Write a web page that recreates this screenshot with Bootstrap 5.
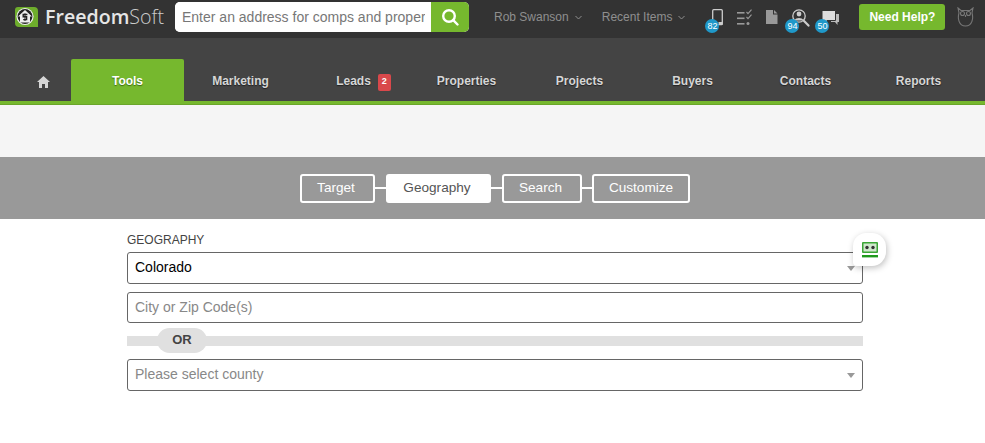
<!DOCTYPE html>
<html lang="en">
<head>
<meta charset="utf-8">
<title>FreedomSoft</title>
<link rel="stylesheet" href="https://cdn.jsdelivr.net/npm/bootstrap@5.3.0/dist/css/bootstrap.min.css">
<style>
html,body{height:100%;overflow:hidden}
body{font-family:"Liberation Sans",Arial,sans-serif;background:#fff;color:#444}
.fs-top{height:38px;background:#333;padding-left:15px;padding-bottom:4px}
.fs-logo{width:160px;height:34px;flex:none}
.fs-logo-text{font-family:"Open Sans",sans-serif;font-size:19.6px;line-height:34px;color:#e6e6e6;margin-left:7px;font-weight:600}
.fs-logo-text span{font-weight:300;color:#ccc}
.fs-search{width:294px;height:30px;border-radius:5px;overflow:hidden;background:#fff;flex:none}
.fs-search input{flex:1;min-width:0;border:0;outline:0;font-size:14px;padding:0 6px 0 7px;color:#777;background:#fff;font-family:inherit}
.fs-search input::placeholder{color:#777;opacity:1}
.fs-search-btn{width:38px;background:#76b82e;border:0;padding:0}
.fs-user{font-size:12px;color:#8f8f8f;white-space:nowrap}
.fs-chev{margin-left:6px}
.fs-gap-rob{margin-left:25px}
.fs-gap-recent{margin-left:20px}
.fs-icon-slot{position:relative;flex:none;height:38px;align-self:flex-start}
.fs-slot-phone{width:24px;margin-left:20px}
.fs-slot-tasks{width:18px;margin-left:7px}
.fs-slot-doc{width:12px;margin-left:12px}
.fs-slot-find{width:24px;margin-left:10px}
.fs-slot-chat{width:22px;margin-left:9px}
.fs-count{position:absolute;top:19px;width:14px;height:14px;border-radius:50%;background:#1f98c9;color:#fff;font-size:9px;line-height:14px;text-align:center}
.fs-c1{left:0}
.fs-c2{left:-3px}
.fs-c3{left:-6px}
.fs-help{background:#76b82e;color:#fff;font-size:12px;font-weight:700;border-radius:3px;width:86px;height:26px;line-height:26px;text-align:center;flex:none;margin-left:16px}
.fs-owl{margin-left:12px;flex:none}
.fs-nav{height:63px;background:#444;align-items:flex-end}
.fs-nav a{display:block;width:113px;height:42px;line-height:44px;text-align:center;color:#d6d6d6;font-size:12px;font-weight:700;text-decoration:none;text-shadow:0 1px 1px #222;flex:none}
.fs-nav a.fs-home{width:71px;padding-left:15px}
.fs-nav a.fs-active{background:#76b82e;color:#fff;border-radius:2px 2px 0 0;text-shadow:0 1px 1px #3d6d10}
.fs-nav a.fs-leads{padding-left:20px}
.fs-pill{display:inline-block;background:#d9484b;color:#fff;width:13px;height:17px;line-height:15px;font-size:9px;border-radius:2px;margin-left:7px;vertical-align:1px;text-shadow:none}
.fs-rule{height:4px;background:#76b82e;border-bottom:1px solid #6aa62a}
.fs-blank{height:52px;background:#f5f5f5}
.fs-steps{height:62px;background:#999;padding-left:300px}
.fs-step{height:29px;line-height:23px;border:2px solid #fff;border-radius:3px;color:#fff;font-size:13.6px;text-align:center;flex:none}
.fs-step.fs-current{background:#fff;color:#555}
.fs-s1{width:75px;padding-right:3px}
.fs-s2{width:105px;padding-right:3px}
.fs-s3{width:80px;padding-right:3px}
.fs-s4{width:98px}
.fs-link{width:11px;height:2px;background:#fff;flex:none}
.fs-link.fs-short{width:10px}
.fs-form{width:736px;margin-left:127px;position:relative;padding-top:14px}
.fs-label{font-size:12px;line-height:15px;height:19px;color:#444}
.fs-field{height:32px;border:1px solid #666;border-radius:3px;font-size:14px;line-height:28px;padding:0 7px;color:#888;position:relative;background:#fff;margin-bottom:8px}
.fs-field.fs-val{color:#000}
.fs-field.fs-thin{height:31px}
.fs-arrow{position:absolute;right:7px;top:13px;border:4px solid transparent;border-top:5px solid #999;border-bottom:0}
.fs-or{height:10px;background:#e0e0e0;margin:13px 0;position:relative}
.fs-or b{position:absolute;left:30px;top:-8px;width:50px;height:25px;line-height:23px;border-radius:13px;background:#e0e0e0;text-align:center;font-size:13px;color:#444}
.fs-widget{position:absolute;left:726px;top:14px;width:33px;height:33px;background:#fff;border-radius:13px 14px 14px 4px;box-shadow:1px 2px 6px rgba(0,0,0,.25);z-index:2}
</style>
</head>
<body>
<header class="fs-top d-flex align-items-center">
  <div class="fs-logo d-flex align-items-center">
    <svg width="23" height="20" viewBox="0 0 23 20"><path d="M3 0H19Q23 0 23 4V20H4Q0 20 0 16V3Q0 0 3 0Z" fill="#6ead2c"/><circle cx="10" cy="9.5" r="8.6" fill="#eee"/><circle cx="10" cy="9.5" r="7.4" fill="#222"/><path d="M10 3 17 9.5H15V15.5H5V9.5H3Z" fill="#eee"/><path d="M12.4 7.5H8.2V9.7H11.6V12.6H8.2" fill="none" stroke="#222" stroke-width="1.4"/><path d="M10 6.3V14" stroke="#222"/></svg>
    <div class="fs-logo-text">Freedom<span>Soft</span></div>
  </div>
  <form class="fs-search d-flex" onsubmit="return false">
    <input type="text" placeholder="Enter an address for comps and property info" aria-label="Search">
    <button class="fs-search-btn d-flex align-items-center justify-content-center" type="button" aria-label="Go">
      <svg width="18" height="18" viewBox="0 0 18 18" fill="none" stroke="#fff" stroke-width="2.4"><circle cx="8" cy="8" r="5.8"/><path d="M12.2 12.2 16.5 16.5" stroke-linecap="round"/></svg>
    </button>
  </form>
  <div class="fs-user fs-gap-rob d-flex align-items-center">Rob Swanson<svg class="fs-chev" width="7" height="5" viewBox="0 0 7 5" fill="none" stroke="#8f8f8f"><path d="M.5 1 3.5 4 6.5 1"/></svg></div>
  <div class="fs-user fs-gap-recent d-flex align-items-center">Recent Items<svg class="fs-chev" width="7" height="5" viewBox="0 0 7 5" fill="none" stroke="#8f8f8f"><path d="M.5 1 3.5 4 6.5 1"/></svg></div>
  <div class="fs-icon-slot fs-slot-phone">
    <svg width="24" height="38" viewBox="0 0 24 38" class="d-block"><rect x="7.7" y="9.7" width="9.6" height="15" rx="1" fill="none" stroke="#ccc" stroke-width="1.3"/><rect x="13.5" y="22" width="4" height="3" fill="#ccc"/></svg>
    <span class="fs-count fs-c1">82</span>
  </div>
  <div class="fs-icon-slot fs-slot-tasks">
    <svg width="18" height="38" viewBox="0 0 18 38" class="d-block" fill="#999"><rect x="1" y="12" width="7.5" height="1.6"/><rect x="1" y="17.5" width="7.5" height="1.6"/><rect x="1" y="23" width="7.5" height="1.6"/><path d="M10.5 12 12 13.6 15.5 9.7" fill="none" stroke="#999" stroke-width="1.1"/><path d="M10.5 17 12 18.6 15.5 14.7" fill="none" stroke="#999" stroke-width="1.1"/><circle cx="12" cy="23.5" r="1.5"/></svg>
  </div>
  <div class="fs-icon-slot fs-slot-doc">
    <svg width="12" height="38" viewBox="0 0 12 38" class="d-block" fill="#999"><path d="M0 10H7V14.5H11.5V24H0Z"/><path d="M8 10 11.5 13.5H8Z"/></svg>
  </div>
  <div class="fs-icon-slot fs-slot-find">
    <svg width="24" height="38" viewBox="0 0 24 38" class="d-block" fill="none" stroke="#ccc"><circle cx="11" cy="16" r="6.2" stroke-width="1.3"/><circle cx="11" cy="14" r="2.4" fill="#ccc" stroke="none"/><path d="M6.5 20.5C8 17.3 14 17.3 15.5 20.5" fill="#ccc" stroke="none"/><path d="M15.8 20.8 20.5 25.6" stroke-width="2.2" stroke-linecap="round"/></svg>
    <span class="fs-count fs-c2">94</span>
  </div>
  <div class="fs-icon-slot fs-slot-chat">
    <svg width="22" height="38" viewBox="0 0 22 38" class="d-block"><path d="M10 14H18V22H16.5V25L14 22H10Z" fill="#bbb"/><path d="M1 10.5H14.5V20.5H6L3.5 23V20.5H1Z" fill="#ddd" stroke="#333"/></svg>
    <span class="fs-count fs-c3">50</span>
  </div>
  <div class="fs-help">Need Help?</div>
  <svg class="fs-owl" width="17" height="20" viewBox="0 0 17 20" fill="none" stroke="#777" stroke-width="1.1"><path d="M1 1 4 3.5H13L16 1 15 6C16.5 11 15.5 19 8.5 19S.5 11 2 6Z"/><circle cx="5.5" cy="6.5" r="2"/><circle cx="11.5" cy="6.5" r="2"/><path d="M8.5 8V10"/></svg>
</header>
<nav class="fs-nav d-flex">
  <a class="fs-home" href="#" aria-label="Home"><svg width="13" height="12" viewBox="0 0 13 12" fill="#d6d6d6"><path d="M6.5 0 13 6H11V12H8V8H5V12H2V6H0Z"/></svg></a>
  <a class="fs-active" href="#">Tools</a>
  <a href="#">Marketing</a>
  <a class="fs-leads" href="#">Leads<span class="fs-pill">2</span></a>
  <a href="#">Properties</a>
  <a href="#">Projects</a>
  <a href="#">Buyers</a>
  <a href="#">Contacts</a>
  <a href="#">Reports</a>
</nav>
<div class="fs-rule"></div>
<div class="fs-blank"></div>
<div class="fs-steps d-flex align-items-center">
  <div class="fs-step fs-s1">Target</div><div class="fs-link"></div>
  <div class="fs-step fs-s2 fs-current">Geography</div><div class="fs-link"></div>
  <div class="fs-step fs-s3">Search</div><div class="fs-link fs-short"></div>
  <div class="fs-step fs-s4">Customize</div>
</div>
<main class="fs-form">
  <div class="fs-label">GEOGRAPHY</div>
  <div class="fs-field fs-val">Colorado<i class="fs-arrow"></i></div>
  <div class="fs-field fs-thin">City or Zip Code(s)</div>
  <div class="fs-or"><b>OR</b></div>
  <div class="fs-field">Please select county<i class="fs-arrow"></i></div>
  <div class="fs-widget d-flex align-items-center justify-content-center">
    <svg width="16" height="16" viewBox="0 0 16 16"><rect width="16" height="11" rx="1" fill="#3aa535"/><rect x="1.5" y="1.5" width="13" height="8" fill="#cfe8cc"/><circle cx="5" cy="5.5" r="1.7" fill="#333"/><circle cx="11" cy="5.5" r="1.7" fill="#333"/><rect y="13" width="16" height="2.4" fill="#1f9a1c"/></svg>
  </div>
</main>
<script src="https://cdn.jsdelivr.net/npm/bootstrap@5.3.0/dist/js/bootstrap.bundle.min.js"></script>
</body>
</html>
